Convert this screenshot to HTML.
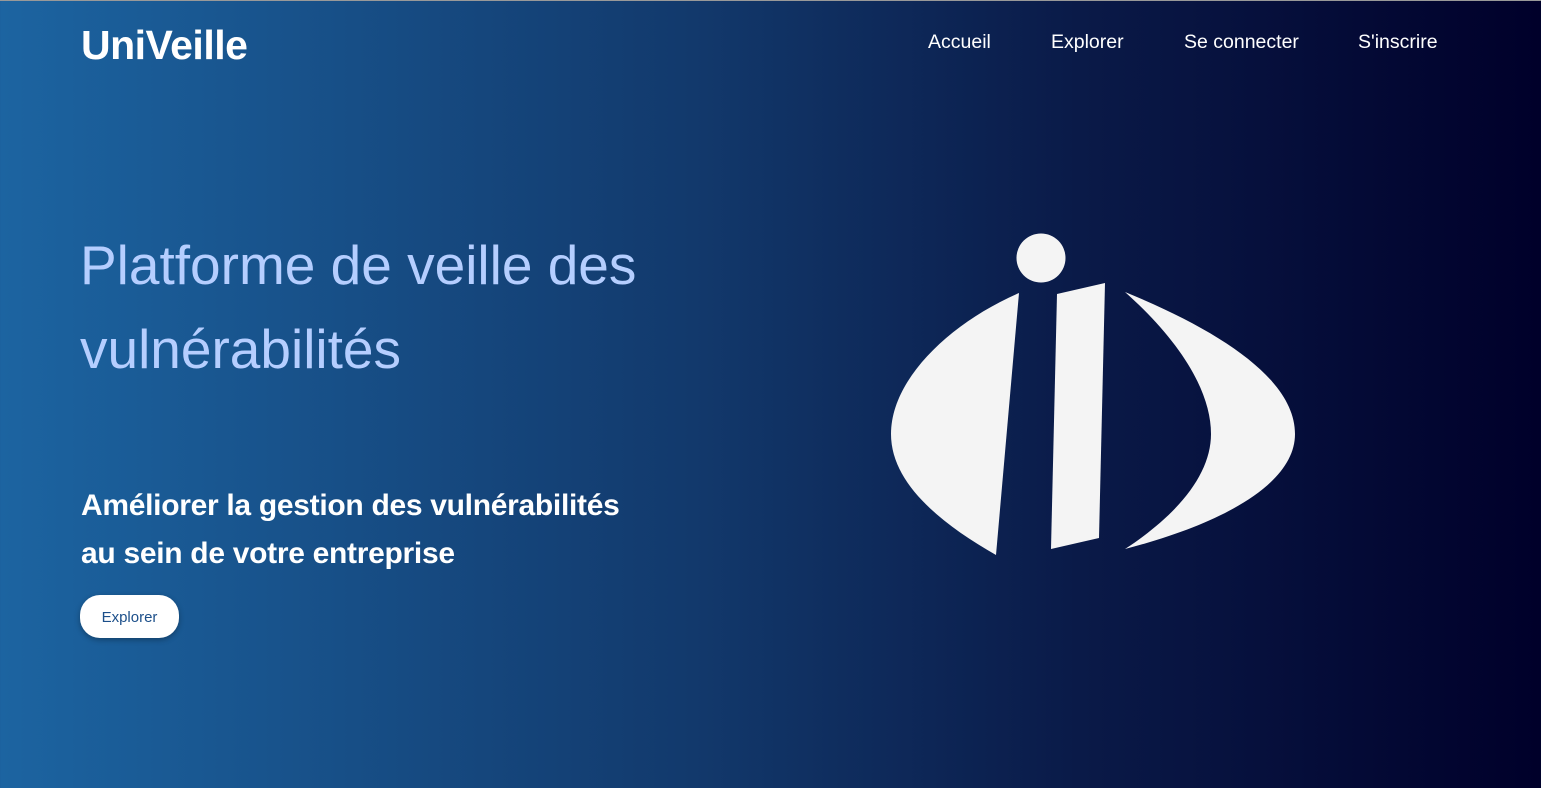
<!DOCTYPE html>
<html><head><meta charset="utf-8"><style>
html,body{margin:0;padding:0;width:1541px;height:788px;overflow:hidden}
body{background:linear-gradient(90deg,#1c64a1 0%,#12396c 45%,#0a1a48 70%,#00002a 100%);font-family:"Liberation Sans",sans-serif;color:#fff;position:relative;border-top:1px solid #999;box-sizing:border-box}
.logo{position:absolute;left:81px;top:21px;font-size:41px;font-weight:bold;letter-spacing:-0.5px}
.nav{position:absolute;top:30px;font-size:19.5px}
h1{position:absolute;left:80px;top:222px;margin:0;font-size:55px;font-weight:normal;line-height:84px;color:#b5ceff}
.sub{position:absolute;left:81px;top:481px;font-size:30px;font-weight:bold;line-height:48px;letter-spacing:-0.3px}
.btn{position:absolute;left:80px;top:594px;width:99px;height:43px;border-radius:20px;background:#fff;color:#1c4f8a;font-size:15px;text-align:center;line-height:45px;box-shadow:0 2px 6px rgba(0,0,0,.3)}
</style></head><body>
<div class="logo">UniVeille</div>
<div class="nav" style="left:928px">Accueil</div>
<div class="nav" style="left:1051px">Explorer</div>
<div class="nav" style="left:1184px">Se connecter</div>
<div class="nav" style="left:1358px">S'inscrire</div>
<h1>Platforme de veille des<br>vulnérabilités</h1>
<div class="sub">Améliorer la gestion des vulnérabilités<br>au sein de votre entreprise</div>
<div class="btn">Explorer</div>
<svg width="1541" height="788" style="position:absolute;left:0;top:0" viewBox="0 0 1541 788">
<g fill="#f4f4f4">
<circle cx="1041" cy="257" r="24.5"/>
<path d="M1019,292 L996,554 C940,522 891,482 891,433 C891,378 950,322 1019,292 Z"/>
<path d="M1057,293 L1105,282 L1099,537 L1051,548 Z"/>
<path d="M1125,291 C1225,332 1295,380 1295,433 C1295,482 1225,522 1125,548 C1180,512 1211,472 1211,433 C1211,390 1180,340 1125,291 Z"/>
</g></svg>
</body></html>
